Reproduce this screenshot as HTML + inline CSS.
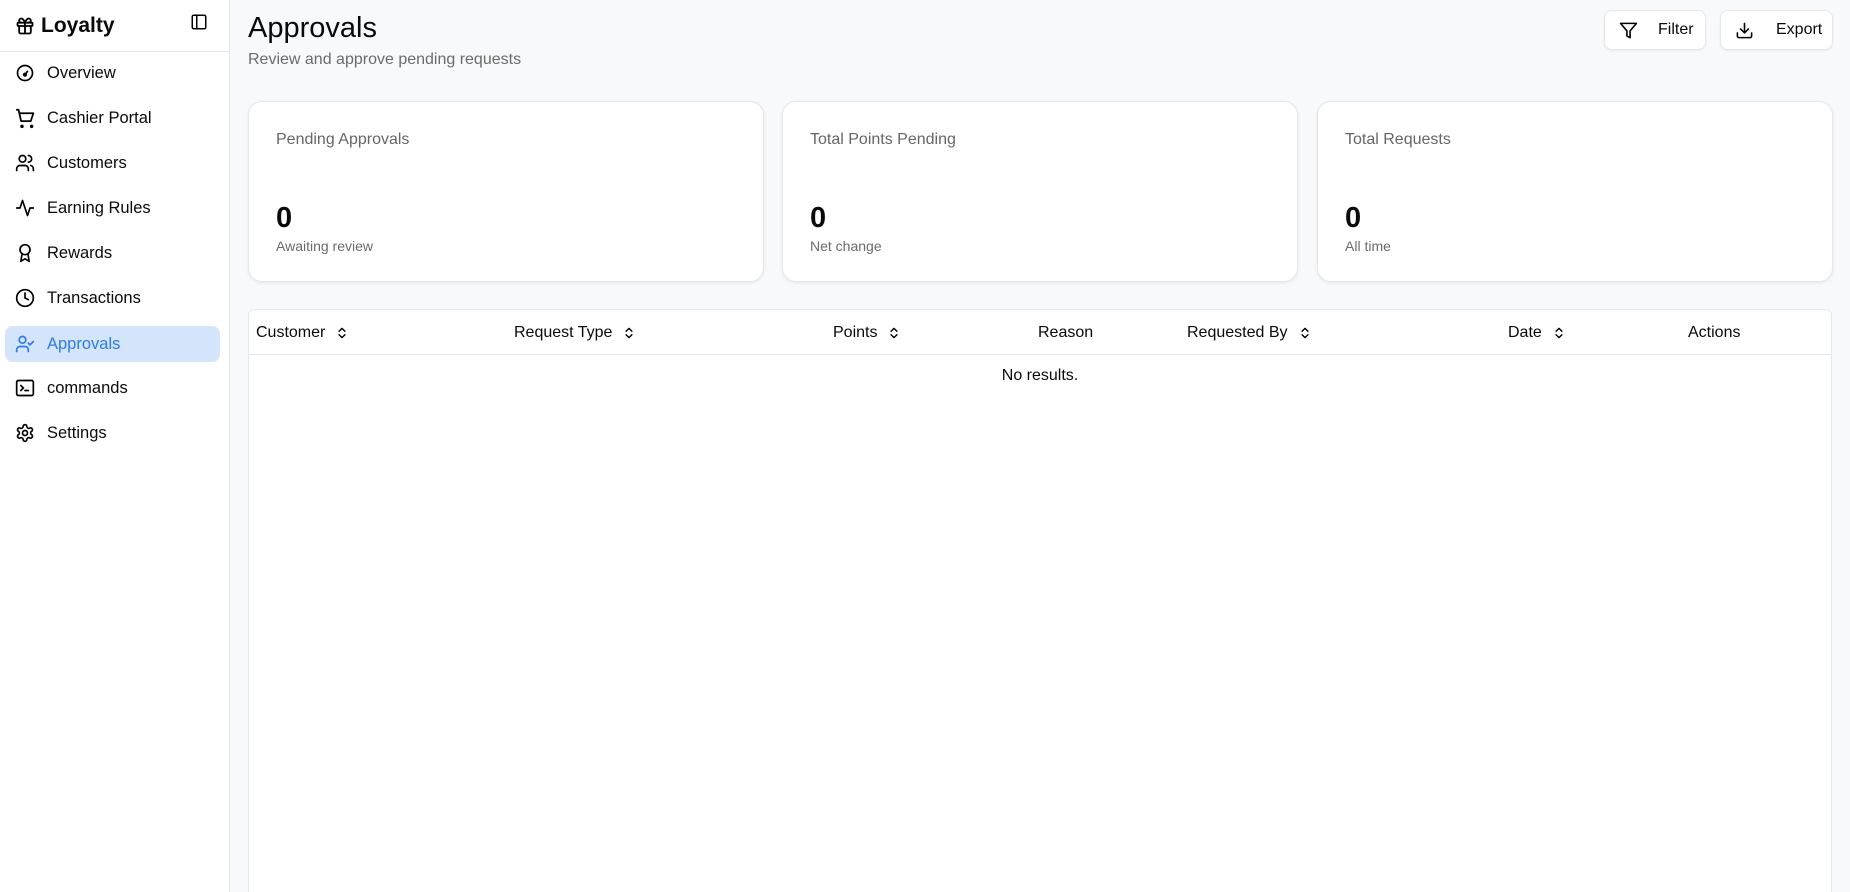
<!DOCTYPE html>
<html><head><meta charset="utf-8"><style>
*{box-sizing:border-box;margin:0;padding:0}
html,body{width:1850px;height:892px;overflow:hidden}
body{font-family:"Liberation Sans",sans-serif;background:#f8f9fb;color:#0a0a0a;position:relative}
.side{position:absolute;left:0;top:0;width:230px;height:892px;background:#fff;border-right:1px solid #e5e7eb}
.brand{height:52px;border-bottom:1px solid #e5e7eb;display:flex;align-items:center;padding-left:15px;font-weight:bold;font-size:21px}
.brand svg{margin-right:6px}
.tog{position:absolute;left:190px;top:13px}
.item{position:absolute;left:5px;width:215px;height:36px;border-radius:8px;display:flex;align-items:center;padding-left:10px;font-size:16.5px}
.item svg{margin-right:12px;flex:none}
.item.act{background:#d3e4fb;color:#2f7be6}
.main{position:absolute;left:248px;top:0;right:18px}
h1{position:absolute;top:12px;font-weight:normal;font-size:29px}
.sub{position:absolute;top:51px;font-size:16px;color:#6b6b6b}
.btn{position:absolute;top:10px;height:40px;background:#fff;border:1px solid #e5e7eb;border-radius:8px;box-shadow:0 1px 2px rgba(0,0,0,.06);display:flex;align-items:center;font-size:16px}
.card{position:absolute;top:101px;height:181px;width:516px;background:#fff;border:1px solid #e5e7eb;border-radius:14px;box-shadow:0 1px 3px rgba(0,0,0,.08)}
.card .l{position:absolute;left:27px;top:29px;font-size:16px;color:#666}
.card .n{position:absolute;left:27px;top:100px;font-size:29px;font-weight:bold}
.card .s{position:absolute;left:27px;top:136px;font-size:14px;color:#6b6b6b}
.tbl{position:absolute;top:309px;left:0;width:1584px;height:583px;background:#fff;border:1px solid #e5e7eb;border-bottom:none;border-radius:6px 6px 0 0}
.hd{height:45px;border-bottom:1px solid #e5e7eb;position:relative}
.th{position:absolute;top:14px;font-size:16px;display:flex;align-items:center}
.th svg{margin-left:10px}
.nr{text-align:center;font-size:16px;margin-top:12px}
</style></head><body>
<div class="side">
<div class="brand"><svg width="20" height="20" viewBox="0 0 24 24" fill="none" stroke="#000" stroke-width="2.2" stroke-linecap="round" stroke-linejoin="round"><rect x="3" y="8" width="18" height="4" rx="1"/><path d="M12 8v13M19 12v7a2 2 0 0 1-2 2H7a2 2 0 0 1-2-2v-7M7.5 8a2.5 2.5 0 0 1 0-5C10 3 12 8 12 8s2-5 4.5-5a2.5 2.5 0 0 1 0 5"/></svg>Loyalty</div>
<svg class="tog" width="18" height="18" viewBox="0 0 24 24" fill="none" stroke="#000" stroke-width="2"><rect x="3" y="3" width="18" height="18" rx="2"/><path d="M9 3v18"/></svg>
<div class="item" style="top:55px"><svg width="20" height="20" viewBox="0 0 24 24" fill="none" stroke="#000" stroke-width="2" stroke-linecap="round"><circle cx="12" cy="12" r="9"/><path d="M12 14l3-4"/><circle cx="12" cy="14" r="1.5"/></svg>Overview</div>
<div class="item" style="top:100px"><svg width="21" height="21" viewBox="0 0 24 24" fill="none" stroke="#000" stroke-width="2" stroke-linecap="round" stroke-linejoin="round" style="margin-right:11px"><circle cx="8" cy="21" r="1"/><circle cx="19" cy="21" r="1"/><path d="M2 2h2l3 13h11l3-9H5.5"/></svg>Cashier Portal</div>
<div class="item" style="top:145px"><svg width="20" height="20" viewBox="0 0 24 24" fill="none" stroke="#000" stroke-width="2" stroke-linecap="round"><circle cx="9" cy="7" r="4"/><path d="M2 21v-2a4 4 0 0 1 4-4h6a4 4 0 0 1 4 4v2M16 3a4 4 0 0 1 0 8M22 21v-2a4 4 0 0 0-3-4"/></svg>Customers</div>
<div class="item" style="top:190px"><svg width="20" height="20" viewBox="0 0 24 24" fill="none" stroke="#000" stroke-width="2" stroke-linecap="round" stroke-linejoin="round"><path d="M22 12h-4l-3 9L9 3l-3 9H2"/></svg>Earning Rules</div>
<div class="item" style="top:235px"><svg width="20" height="20" viewBox="0 0 24 24" fill="none" stroke="#000" stroke-width="2" stroke-linecap="round" stroke-linejoin="round"><circle cx="12" cy="8" r="6"/><path d="M8.5 13L7 22l5-3 5 3-1.5-9"/></svg>Rewards</div>
<div class="item" style="top:280px"><svg width="20" height="20" viewBox="0 0 24 24" fill="none" stroke="#000" stroke-width="2" stroke-linecap="round"><circle cx="12" cy="12" r="10"/><path d="M12 6v6l4 2"/></svg>Transactions</div>
<div class="item act" style="top:326px"><svg width="20" height="20" viewBox="0 0 24 24" fill="none" stroke="#2f7be6" stroke-width="2" stroke-linecap="round"><circle cx="9" cy="7" r="4"/><path d="M2 21v-2a4 4 0 0 1 4-4h6a4 4 0 0 1 4 4v2M16 11l2 2 4-4"/></svg>Approvals</div>
<div class="item" style="top:370px"><svg width="20" height="20" viewBox="0 0 24 24" fill="none" stroke="#000" stroke-width="2" stroke-linecap="round"><rect x="2" y="3" width="20" height="18" rx="2"/><path d="M7 9l3 3-3 3M12 15h4"/></svg>commands</div>
<div class="item" style="top:415px"><svg width="20" height="20" viewBox="0 0 24 24" fill="none" stroke="#000" stroke-width="2" stroke-linecap="round" stroke-linejoin="round"><path d="M12.2 2h-.4a2 2 0 0 0-2 2v.2a2 2 0 0 1-1 1.7l-.4.3a2 2 0 0 1-2 0l-.2-.1a2 2 0 0 0-2.7.7l-.2.4a2 2 0 0 0 .7 2.7l.2.1a2 2 0 0 1 1 1.7v.5a2 2 0 0 1-1 1.8l-.2.1a2 2 0 0 0-.7 2.7l.2.4a2 2 0 0 0 2.7.7l.2-.1a2 2 0 0 1 2 0l.4.3a2 2 0 0 1 1 1.7v.2a2 2 0 0 0 2 2h.4a2 2 0 0 0 2-2v-.2a2 2 0 0 1 1-1.7l.4-.3a2 2 0 0 1 2 0l.2.1a2 2 0 0 0 2.7-.7l.2-.4a2 2 0 0 0-.7-2.7l-.2-.1a2 2 0 0 1-1-1.8v-.5a2 2 0 0 1 1-1.7l.2-.1a2 2 0 0 0 .7-2.7l-.2-.4a2 2 0 0 0-2.7-.7l-.2.1a2 2 0 0 1-2 0l-.4-.3a2 2 0 0 1-1-1.7V4a2 2 0 0 0-2-2z"/><circle cx="12" cy="12" r="3"/></svg>Settings</div>
</div>
<div class="main">
<h1>Approvals</h1>
<div class="sub">Review and approve pending requests</div>
<div class="btn" style="left:1356px;width:102px"><svg style="margin:0 20px 0 14px" width="19" height="19" viewBox="0 0 24 24" fill="none" stroke="#000" stroke-width="2" stroke-linejoin="round"><path d="M22 3H2l8 9.5V19l4 2v-8.5z"/></svg>Filter</div>
<div class="btn" style="left:1472px;width:113px"><svg style="margin:0 22px 0 14px" width="19" height="19" viewBox="0 0 24 24" fill="none" stroke="#000" stroke-width="2" stroke-linecap="round" stroke-linejoin="round"><path d="M21 15v4a2 2 0 0 1-2 2H5a2 2 0 0 1-2-2v-4M7 10l5 5 5-5M12 15V3"/></svg>Export</div>
<div class="card" style="left:0"><div class="l">Pending Approvals</div><div class="n">0</div><div class="s">Awaiting review</div></div>
<div class="card" style="left:534px"><div class="l">Total Points Pending</div><div class="n">0</div><div class="s">Net change</div></div>
<div class="card" style="left:1069px"><div class="l">Total Requests</div><div class="n">0</div><div class="s">All time</div></div>
<div class="tbl"><div class="hd">
<div class="th" style="left:7px">Customer<svg width="14" height="14" viewBox="0 0 24 24" fill="none" stroke="#000" stroke-width="2.4" stroke-linecap="round" stroke-linejoin="round"><path d="M7 15l5 5 5-5M7 9l5-5 5 5"/></svg></div>
<div class="th" style="left:265px">Request Type<svg width="14" height="14" viewBox="0 0 24 24" fill="none" stroke="#000" stroke-width="2.4" stroke-linecap="round" stroke-linejoin="round"><path d="M7 15l5 5 5-5M7 9l5-5 5 5"/></svg></div>
<div class="th" style="left:584px">Points<svg width="14" height="14" viewBox="0 0 24 24" fill="none" stroke="#000" stroke-width="2.4" stroke-linecap="round" stroke-linejoin="round"><path d="M7 15l5 5 5-5M7 9l5-5 5 5"/></svg></div>
<div class="th" style="left:789px">Reason</div>
<div class="th" style="left:938px">Requested By<svg width="14" height="14" viewBox="0 0 24 24" fill="none" stroke="#000" stroke-width="2.4" stroke-linecap="round" stroke-linejoin="round"><path d="M7 15l5 5 5-5M7 9l5-5 5 5"/></svg></div>
<div class="th" style="left:1259px">Date<svg width="14" height="14" viewBox="0 0 24 24" fill="none" stroke="#000" stroke-width="2.4" stroke-linecap="round" stroke-linejoin="round"><path d="M7 15l5 5 5-5M7 9l5-5 5 5"/></svg></div>
<div class="th" style="left:1439px">Actions</div>
</div><div class="nr">No results.</div></div>
</div>
</body></html>
